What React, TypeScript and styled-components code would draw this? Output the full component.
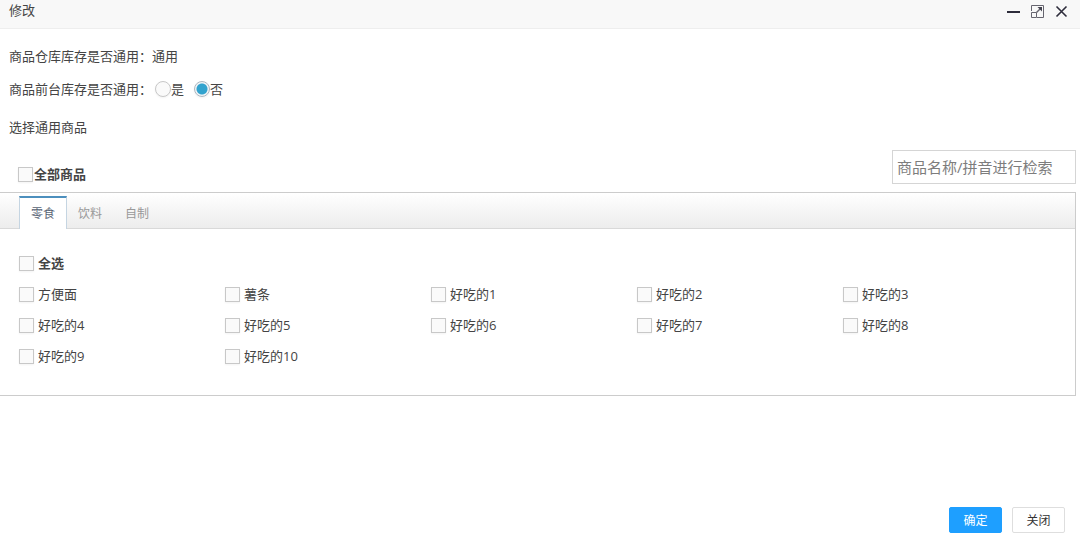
import React, { useState } from 'react';
import styled, { createGlobalStyle, css } from 'styled-components';

const GlobalStyle = createGlobalStyle`
  *, *::before, *::after { box-sizing: border-box; }
  body {
    margin: 0;
    background: #fff;
    color: #444;
    font-family: 'Open Sans', 'Noto Sans CJK SC', sans-serif;
    font-size: 13px;
    line-height: 20px;
  }
  button, input { font-family: inherit; }
`;

const Dialog = styled.div`
  display: flex;
  flex-direction: column;
  min-height: 100vh;
`;

const TitleBar = styled.header`
  display: flex;
  justify-content: space-between;
  height: 29px;
  padding: 0 10px 0 9px;
  background: #f8f8f8;
  border-bottom: 1px solid #eee;
`;

const Title = styled.h1`
  margin: 0;
  font-size: 13px;
  font-weight: 400;
  line-height: 20px;
  color: #444;
`;

const WindowActions = styled.div`
  display: flex;
  gap: 8px;
  height: 22px;
  align-items: center;
`;

const IconButton = styled.button`
  display: flex;
  width: 16px;
  height: 16px;
  padding: 0;
  border: 0;
  background: none;
  color: #2d2c3b;
  cursor: pointer;
`;

const Settings = styled.section`
  display: flex;
  flex-direction: column;
  padding: 17px 9px 0;
`;

const SettingRow = styled.div<{ $tall?: boolean }>`
  display: flex;
  align-items: center;
  height: ${(p) => (p.$tall ? 40 : 20)}px;
  margin-bottom: ${(p) => (p.$tall ? 8 : 3)}px;
`;

const RadioGroup = styled.div`
  display: flex;
  gap: 10px;
  margin-left: 3px;
`;

const Choice = styled.label<{ $gap?: number; $bold?: boolean }>`
  display: flex;
  align-items: center;
  gap: ${(p) => p.$gap ?? 0}px;
  font-weight: ${(p) => (p.$bold ? 700 : 400)};
  white-space: nowrap;
  cursor: pointer;
`;

const boxStyle = css`
  appearance: none;
  flex: none;
  margin: 0;
  border: 1px solid #c8c8c8;
  background: #fafafa;
  box-shadow: 0 1px 2px rgba(0, 0, 0, 0.05);
`;

const Radio = styled.input.attrs({ type: 'radio' })`
  ${boxStyle}
  width: 16px;
  height: 16px;
  border-radius: 50%;
  &:checked {
    border-color: #adb8c0;
    background: radial-gradient(circle, #32a3ce 0 5px, #f0f4f7 6px);
  }
`;

const Checkbox = styled.input.attrs({ type: 'checkbox' })`
  ${boxStyle}
  width: 15px;
  height: 15px;
  &:checked {
    border-color: #adb8c0;
    background: #32a3ce;
    box-shadow: inset 0 0 0 3px #f0f4f7;
  }
`;

const Toolbar = styled.div`
  display: flex;
  justify-content: space-between;
  align-items: flex-end;
  padding: 10px 4px 8px 18px;
`;

const SearchInput = styled.input`
  width: 184px;
  height: 34px;
  padding: 0 4px;
  border: 1px solid #d5d5d5;
  font-size: 15px;
  color: #555;
  &::placeholder { color: #7d7d7d; opacity: 1; }
`;

const Panel = styled.section`
  margin-right: 4px;
  border: 1px solid #ccc;
  border-left: 0;
`;

const TabList = styled.div`
  display: flex;
  align-items: flex-end;
  height: 36px;
  padding-left: 19px;
  background: linear-gradient(#fff, #ececec);
  box-shadow: inset 0 -1px #d9d9d9;
`;

const Tab = styled.button<{ $active: boolean }>`
  height: 33px;
  padding: 0 11px;
  border: solid transparent;
  border-width: 2px 1px 0;
  background: transparent;
  font-size: 12px;
  line-height: 20px;
  color: #999;
  cursor: pointer;
  & + & { margin-left: -1px; }
  ${(p) =>
    p.$active &&
    css`
      border-color: #4c8fbd #c5d5e2 transparent;
      background: #fff;
      color: #576373;
    `}
`;

const TabPanel = styled.div`
  display: flex;
  flex-direction: column;
  gap: 11px;
  padding: 24px 26px 29px 19px;
`;

const ProductGrid = styled.div`
  display: grid;
  grid-template-columns: repeat(5, 1fr);
  row-gap: 11px;
`;

const Footer = styled.footer`
  display: flex;
  justify-content: flex-end;
  gap: 10px;
  margin-top: auto;
  padding: 16px 15px 4px;
`;

const ActionButton = styled.button<{ $primary?: boolean }>`
  min-width: 53px;
  height: 26px;
  padding: 2px 12px 0;
  border: 1px solid ${(p) => (p.$primary ? '#1e9fff' : '#dedede')};
  border-radius: 2px;
  background: ${(p) => (p.$primary ? '#1e9fff' : '#fff')};
  color: ${(p) => (p.$primary ? '#fff' : '#333')};
  font-size: 12px;
  line-height: 22px;
  cursor: pointer;
`;

const categories: { name: string; products: string[] }[] = [
  {
    name: '零食',
    products: ['方便面', '薯条', ...Array.from({ length: 10 }, (_, i) => `好吃的${i + 1}`)],
  },
  { name: '饮料', products: [] },
  { name: '自制', products: [] },
];

export default function App() {
  const [shared, setShared] = useState(false);
  const [active, setActive] = useState(0);

  return (
    <Dialog role="dialog" aria-labelledby="dialog-title">
      <GlobalStyle />
      <TitleBar>
        <Title id="dialog-title">修改</Title>
        <WindowActions>
          <IconButton type="button" aria-label="最小化">
            <svg width="16" height="16" viewBox="0 0 16 16">
              <path d="M1 9h13" stroke="currentColor" strokeWidth="2" />
            </svg>
          </IconButton>
          <IconButton type="button" aria-label="最大化">
            <svg width="16" height="16" viewBox="0 0 16 16" fill="none" stroke="#66656f">
              <path d="M1.500 8V2.500H13.500V14.500H7" />
              <path d="M1.500 9.500H6.500V14.500H1.500Z" />
              <path d="M6.500 9.500L10.500 5.500" strokeWidth="1.400" />
              <path d="M7.500 4H12V8.500Z" fill="#44434f" stroke="none" />
            </svg>
          </IconButton>
          <IconButton type="button" aria-label="关闭窗口">
            <svg width="16" height="16" viewBox="0 0 16 16">
              <path d="M2.500 3.500L12.500 13.500M12.500 3.500L2.500 13.500" stroke="currentColor" strokeWidth="1.600" />
            </svg>
          </IconButton>
        </WindowActions>
      </TitleBar>

      <Settings>
        <SettingRow>商品仓库库存是否通用：通用</SettingRow>
        <SettingRow $tall>
          <span id="front-stock">商品前台库存是否通用：</span>
          <RadioGroup role="radiogroup" aria-labelledby="front-stock">
            <Choice>
              <Radio name="front" checked={shared} onChange={() => setShared(true)} />是
            </Choice>
            <Choice>
              <Radio name="front" checked={!shared} onChange={() => setShared(false)} />否
            </Choice>
          </RadioGroup>
        </SettingRow>
        <SettingRow>选择通用商品</SettingRow>
      </Settings>

      <Toolbar>
        <Choice $gap={1} $bold>
          <Checkbox />全部商品
        </Choice>
        <SearchInput type="text" aria-label="商品检索" placeholder="商品名称/拼音进行检索" />
      </Toolbar>

      <Panel>
        <TabList role="tablist">
          {categories.map((c, i) => (
            <Tab
              key={c.name}
              type="button"
              role="tab"
              aria-selected={i === active}
              $active={i === active}
              onClick={() => setActive(i)}
            >
              {c.name}
            </Tab>
          ))}
        </TabList>
        <TabPanel role="tabpanel">
          <Choice $gap={4} $bold>
            <Checkbox />全选
          </Choice>
          <ProductGrid>
            {categories[active].products.map((name) => (
              <Choice key={name} $gap={4}>
                <Checkbox />
                {name}
              </Choice>
            ))}
          </ProductGrid>
        </TabPanel>
      </Panel>

      <Footer>
        <ActionButton type="button" $primary>确定</ActionButton>
        <ActionButton type="button">关闭</ActionButton>
      </Footer>
    </Dialog>
  );
}
